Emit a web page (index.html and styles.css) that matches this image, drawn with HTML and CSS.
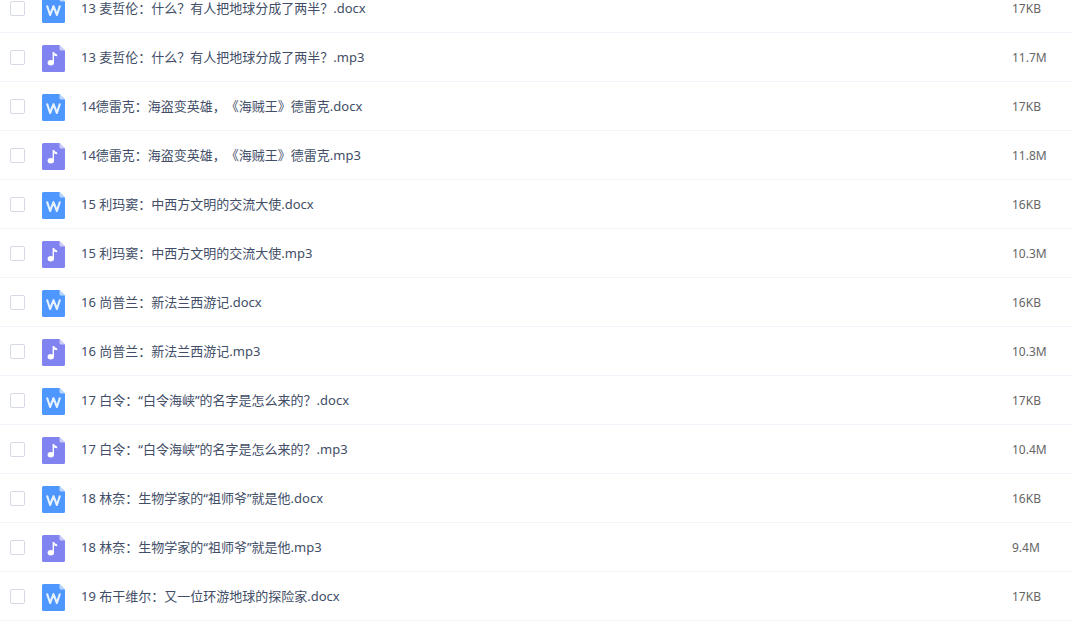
FILE: index.html
```html
<!DOCTYPE html>
<html lang="zh-CN">
<head>
<meta charset="utf-8">
<meta name="viewport" content="width=device-width, initial-scale=1">
<title>文件列表</title>
<link rel="stylesheet" href="styles.css">
</head>
<body>
<svg class="sprite" aria-hidden="true">
  <symbol id="doc" viewBox="0 0 23 27">
    <path fill="#4d97ff" d="M1.500 0H17.500L23 5.500V25.500a1.500 1.500 0 0 1-1.500 1.500H1.500a1.500 1.500 0 0 1-1.500-1.500V1.500a1.500 1.500 0 0 1 1.500-1.500z"/>
    <path fill="#b8d6ff" d="M17.500 0L23 5.500H19a1.500 1.500 0 0 1-1.500-1.500z"/>
    <path fill="none" stroke="#e9f2ff" stroke-width="2.100" stroke-linejoin="round" d="M5 9.500L8.100 19L11.500 10.200L14.900 19L18 9.500"/>
  </symbol>
  <symbol id="audio" viewBox="0 0 23 27">
    <path fill="#8183f1" d="M1.500 0H17.500L23 5.500V25.500a1.500 1.500 0 0 1-1.500 1.500H1.500a1.500 1.500 0 0 1-1.500-1.500V1.500a1.500 1.500 0 0 1 1.500-1.500z"/>
    <path fill="#cdcdfa" d="M17.500 0L23 5.500H19a1.500 1.500 0 0 1-1.500-1.500z"/>
    <ellipse cx="8.800" cy="17.700" rx="3.200" ry="2.700" fill="#fff"/>
    <path fill="#fff" d="M10.600 7H12.200C12.500 8.600 13.600 8.900 15.200 9.500V11.200C13.900 11.100 12.800 10.700 12 10.200V17.700H10.600z"/>
  </symbol>
</svg>
<main class="viewer">
<table class="files">
<tbody>
<tr class="file"><td class="pick"><input class="box" type="checkbox" id="f1"></td><td class="name"><label class="title" for="f1"><svg class="icon"><use href="#doc"/></svg>13 麦哲伦：什么？有人把地球分成了两半？.docx</label></td><td class="size">17KB</td></tr>
<tr class="file"><td class="pick"><input class="box" type="checkbox" id="f2"></td><td class="name"><label class="title" for="f2"><svg class="icon"><use href="#audio"/></svg>13 麦哲伦：什么？有人把地球分成了两半？.mp3</label></td><td class="size">11.7M</td></tr>
<tr class="file"><td class="pick"><input class="box" type="checkbox" id="f3"></td><td class="name"><label class="title" for="f3"><svg class="icon"><use href="#doc"/></svg>14德雷克：海盗变英雄，《海贼王》德雷克.docx</label></td><td class="size">17KB</td></tr>
<tr class="file"><td class="pick"><input class="box" type="checkbox" id="f4"></td><td class="name"><label class="title" for="f4"><svg class="icon"><use href="#audio"/></svg>14德雷克：海盗变英雄，《海贼王》德雷克.mp3</label></td><td class="size">11.8M</td></tr>
<tr class="file"><td class="pick"><input class="box" type="checkbox" id="f5"></td><td class="name"><label class="title" for="f5"><svg class="icon"><use href="#doc"/></svg>15 利玛窦：中西方文明的交流大使.docx</label></td><td class="size">16KB</td></tr>
<tr class="file"><td class="pick"><input class="box" type="checkbox" id="f6"></td><td class="name"><label class="title" for="f6"><svg class="icon"><use href="#audio"/></svg>15 利玛窦：中西方文明的交流大使.mp3</label></td><td class="size">10.3M</td></tr>
<tr class="file"><td class="pick"><input class="box" type="checkbox" id="f7"></td><td class="name"><label class="title" for="f7"><svg class="icon"><use href="#doc"/></svg>16 尚普兰：新法兰西游记.docx</label></td><td class="size">16KB</td></tr>
<tr class="file"><td class="pick"><input class="box" type="checkbox" id="f8"></td><td class="name"><label class="title" for="f8"><svg class="icon"><use href="#audio"/></svg>16 尚普兰：新法兰西游记.mp3</label></td><td class="size">10.3M</td></tr>
<tr class="file"><td class="pick"><input class="box" type="checkbox" id="f9"></td><td class="name"><label class="title" for="f9"><svg class="icon"><use href="#doc"/></svg>17 白令：“白令海峡”的名字是怎么来的？.docx</label></td><td class="size">17KB</td></tr>
<tr class="file"><td class="pick"><input class="box" type="checkbox" id="f10"></td><td class="name"><label class="title" for="f10"><svg class="icon"><use href="#audio"/></svg>17 白令：“白令海峡”的名字是怎么来的？.mp3</label></td><td class="size">10.4M</td></tr>
<tr class="file"><td class="pick"><input class="box" type="checkbox" id="f11"></td><td class="name"><label class="title" for="f11"><svg class="icon"><use href="#doc"/></svg>18 林奈：生物学家的“祖师爷”就是他.docx</label></td><td class="size">16KB</td></tr>
<tr class="file"><td class="pick"><input class="box" type="checkbox" id="f12"></td><td class="name"><label class="title" for="f12"><svg class="icon"><use href="#audio"/></svg>18 林奈：生物学家的“祖师爷”就是他.mp3</label></td><td class="size">9.4M</td></tr>
<tr class="file"><td class="pick"><input class="box" type="checkbox" id="f13"></td><td class="name"><label class="title" for="f13"><svg class="icon"><use href="#doc"/></svg>19 布干维尔：又一位环游地球的探险家.docx</label></td><td class="size">17KB</td></tr>
</tbody>
</table>
</main>
</body>
</html>
```
FILE: styles.css
```css
* {
  box-sizing: border-box;
}

body {
  margin: 0;
  background: #fff;
  color: #424e67;
  font: 13px/20px "Noto Sans", "Noto Sans CJK SC", sans-serif;
  text-spacing-trim: space-all;
}

.sprite {
  display: none;
}

.viewer {
  height: 100vh;
  overflow: hidden;
}

/* The list is scrolled part of the way into its first row. */
.files {
  width: 100%;
  margin-top: -16px;
  border-collapse: separate;
  border-spacing: 0;
  table-layout: auto;
}

.file td {
  height: 49px;
  padding: 0;
  border-bottom: 1px solid #f0f4fb;
  vertical-align: middle;
}

.file .pick {
  width: 42px;
  padding: 1px 0 0 10px;
}

.box {
  display: block;
  appearance: none;
  width: 15px;
  height: 15px;
  margin: 0;
  border: 1px solid #d5dae5;
  border-radius: 2px;
  background: #fff;
}

.box:checked {
  border-color: #4d97ff;
  background: #4d97ff;
}

.title {
  display: flex;
  align-items: center;
  gap: 16px;
  white-space: nowrap;
}

.icon {
  flex: none;
  width: 23px;
  height: 27px;
  margin-top: 2px;
}

.file .size {
  width: 60px;
  padding-top: 2px;
  color: #666;
  font-size: 12px;
}
```
